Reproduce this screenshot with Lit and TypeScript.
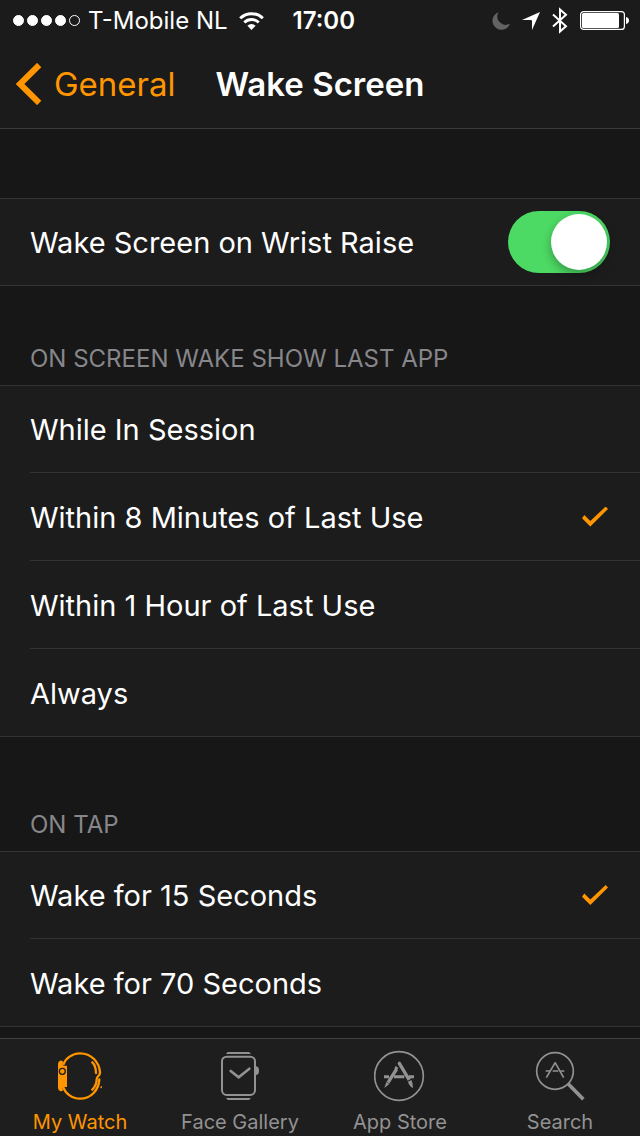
import { LitElement, html, css, svg } from "lit";
import { customElement, property, state } from "lit/decorators.js";

const moonIcon = svg`<svg class="moon" width="18" height="18" viewBox="0 0 18 18" aria-hidden="true"><path d="M6.6.2A9 9 0 1 0 18 11.6 8.3 8.3 0 0 1 6.6.2Z" fill="#636363"/></svg>`;
const arrowIcon = svg`<svg width="18" height="18" viewBox="0 0 18 18" aria-hidden="true"><path d="M18 0 10 18V9.2Q10 8 8.800 8H0Z" fill="#fff"/></svg>`;
const bluetoothIcon = svg`<svg width="16" height="27" viewBox="0 0 16 27" fill="none" stroke="#fff" stroke-width="2" aria-hidden="true"><path d="M1 7.500 14 19.300 8 24.600V2.400L14 7.700 1 19.500"/></svg>`;
const batteryIcon = svg`<svg width="49" height="19" viewBox="0 0 49 19" aria-hidden="true"><rect x=".6" y=".6" width="43.8" height="17.8" rx="3" fill="none" stroke="#fff" stroke-width="1.2"/><rect x="2" y="2" width="37" height="15" rx="1.500" fill="#fff"/><path d="M46 6q3 .8 3 3.500T46 13Z" fill="#fff"/></svg>`;
const wifiIcon = svg`<svg width="25" height="18" viewBox="0 0 25 18" aria-hidden="true"><g fill="none" stroke="#fff" stroke-width="3"><path d="M1.200 6.300a16 16 0 0 1 22.600 0"/><path d="M5.300 10.500a10.200 10.200 0 0 1 14.400 0"/></g><path d="M12.500 18 8.400 13.800a5.800 5.800 0 0 1 8.200 0Z" fill="#fff"/></svg>`;
const backIcon = svg`<svg width="26" height="42" viewBox="0 0 26 42" fill="none" stroke="currentColor" stroke-width="6" aria-hidden="true"><path d="M23.200 2 4 21l19.200 19"/></svg>`;

const watchIcon = svg`<svg class="icon" viewBox="162 90 156 156" aria-hidden="true">
  <path d="M174 132q0-7 6-10 8-2 9 4l-1 8 3 3h10v64h-10l-3 3 1 6q-2 6-9 3-6-3-6-10Z" fill="currentColor"/>
  <circle cx="187" cy="154" r="9" fill="currentColor" stroke="#1e1e1e" stroke-width="4"/>
  <g fill="none" stroke="currentColor" stroke-linecap="round" stroke-width="7">
    <path d="M191 132c4-14 24-32 49-32 34 0 58 26 60 58 0 10-10 10-10 20 0 13-5 23-13 31"/>
    <path d="M191 204c4 14 24 32 49 32 34 0 56-26 58-58"/>
    <path d="M277 127c8 8 11 19 11 32"/>
    <path stroke-width="4" d="M303 203l1-3"/>
  </g>
</svg>`;
const faceIcon = svg`<svg class="icon" viewBox="162 90 156 156" fill="none" stroke="currentColor" stroke-width="6" aria-hidden="true">
  <rect x="186" y="110" width="99" height="115" rx="14"/>
  <path d="m212 153 24 19 32-26" stroke-width="8" stroke-linecap="round"/>
  <path d="M203 96h64l6 6h-75ZM198 234h75l-6 6h-64ZM287 139q10 0 10 13t-10 13Z" fill="currentColor" stroke="none"/>
</svg>`;
const storeIcon = svg`<svg class="icon" viewBox="162 90 156 156" fill="none" stroke="currentColor" aria-hidden="true">
  <circle cx="237" cy="168" r="73" stroke-width="5"/>
  <path d="M192 170h15M222 170h31M266 170h16" stroke-width="9"/>
  <path d="M230 147 204 188" stroke-width="10"/>
  <path d="m227 138 8 5-4 7-8-5ZM199 186l9 6-15 12Z" fill="currentColor" stroke="none"/>
  <path d="M238 130 263 172" stroke-width="10" stroke-linecap="round"/>
  <path d="m260 177 10-6 3 5-10 6ZM264 185l10-5q5 8 5 24-12-6-15-19Z" fill="currentColor" stroke="none"/>
</svg>`;
const searchIcon = svg`<svg class="icon" viewBox="162 90 156 156" fill="none" stroke="currentColor" aria-hidden="true">
  <circle cx="225" cy="153" r="55" stroke-width="5"/>
  <path d="m265 192 45 46" stroke-width="11"/>
  <path d="M197 153h13M218 153h17M242 153h11" stroke-width="5"/>
  <path d="m226 127-27 46M225 127l26 46" stroke-width="5"/>
</svg>`;

@customElement("status-bar")
export class StatusBar extends LitElement {
  static styles = css`
    :host { display: flex; align-items: center; height: 41px; padding: 0 11px 0 13px; font-size: 24px; line-height: 40px; }
    .dots { display: flex; gap: 3px; margin-right: 8px; }
    .dot { box-sizing: border-box; width: 11px; height: 11px; border-radius: 50%; background: #fff; border: 1px solid #fff; }
    .empty { background: none; }
    .carrier { margin-right: 11px; }
    .time { margin-left: 29px; font-weight: 600; }
    .right { display: flex; align-items: center; gap: 12px; margin-left: auto; }
  `;
  render() {
    return html`
      <span class="dots" role="img" aria-label="Signal: 4 of 5">
        ${[1, 2, 3, 4, 5].map((n) => html`<span class="dot ${n > 4 ? "empty" : ""}"></span>`)}
      </span>
      <span class="carrier">T-Mobile NL</span>${wifiIcon}
      <span class="time">17:00</span>
      <span class="right">${moonIcon}${arrowIcon}${bluetoothIcon}${batteryIcon}</span>
    `;
  }
}

@customElement("option-group")
export class OptionGroup extends LitElement {
  @property() heading = "";
  @property({ attribute: false }) options: string[] = [];
  @property() value = "";

  static styles = css`
    :host { display: block; }
    .group { margin: 0; padding: 0; border: 0; min-width: 0; }
    .heading { padding: 0 30px 11px; color: #87868b; font-size: 24px; line-height: 30px; text-transform: uppercase; }
    .list { border: solid #333; border-width: 1px 0; background: #1c1c1c; }
    .option { box-sizing: border-box; display: flex; align-items: center; justify-content: space-between; height: 88px; margin-left: 30px; padding-right: 32px; border-bottom: 1px solid #333; font-size: 29px; line-height: 40px; }
    .option:first-child { height: 87px; }
    .option:last-child { height: 87px; border-bottom: 0; }
    .name { padding-top: 2px; }
    .check { appearance: none; flex: none; width: 26px; height: 20px; margin: 0; clip-path: polygon(9% 43%, 32% 72%, 91% 0, 100% 13%, 32% 100%, 0 59%); }
    .check:checked { background: #ff9500; }
  `;
  render() {
    return html`
      <fieldset class="group">
        <legend class="heading">${this.heading}</legend>
        <div class="list">
          ${this.options.map(
            (option) => html`<label class="option">
              <span class="name">${option}</span>
              <input class="check" type="radio" name="option" .checked=${option === this.value}
                @change=${() => (this.value = option)} />
            </label>`
          )}
        </div>
      </fieldset>
    `;
  }
}

@customElement("tab-bar")
export class TabBar extends LitElement {
  @state() private active = "My Watch";
  private tabs = [
    { label: "My Watch", icon: watchIcon },
    { label: "Face Gallery", icon: faceIcon },
    { label: "App Store", icon: storeIcon },
    { label: "Search", icon: searchIcon },
  ];
  static styles = css`
    :host { display: block; }
    .tabs { display: grid; grid-template-columns: repeat(4, 1fr); border-top: 1px solid #404040; background: #1e1e1e; }
    .tab { display: flex; flex-direction: column; align-items: center; gap: 8px; padding: 11px 0 2px; color: #929292; font-size: 20px; line-height: 24px; text-decoration: none; }
    .active { color: #ff9500; }
    .icon { display: block; width: 52px; height: 52px; }
  `;
  render() {
    return html`<nav class="tabs">
      ${this.tabs.map(
        (t) => html`<a class="tab ${t.label === this.active ? "active" : ""}" href="#"
          @click=${(e: Event) => { e.preventDefault(); this.active = t.label; }}>${t.icon}<span>${t.label}</span></a>`
      )}
    </nav>`;
  }
}

@customElement("app-root")
export class AppRoot extends LitElement {
  @state() private wake = true;
  static styles = css`
    :host { display: flex; flex-direction: column; height: 100vh; overflow: hidden; background: #171717; color: #fff; font-family: Inter, "Liberation Sans", sans-serif; }
    .header { flex: none; background: #1b1b1b; border-bottom: 1px solid #3a3a3a; }
    .navbar { box-sizing: border-box; display: grid; grid-template-columns: 1fr auto 1fr; align-items: center; height: 87px; padding: 0 16px 2px; }
    .back { justify-self: start; display: flex; align-items: center; gap: 12px; padding: 0; border: 0; background: none; color: #ff9500; font: 400 33px/44px Inter, "Liberation Sans", sans-serif; }
    .title { margin: 0; font-size: 33px; line-height: 44px; font-weight: 600; }
    .content { flex: 1; min-height: 0; overflow: hidden; padding-top: 69px; }
    .row { box-sizing: border-box; display: flex; align-items: center; justify-content: space-between; height: 88px; padding: 0 30px; border: solid #333; border-width: 1px 0; background: #1c1c1c; font-size: 29px; line-height: 40px; }
    .name { padding-top: 2px; }
    .switch { appearance: none; flex: none; display: flex; box-sizing: border-box; width: 102px; height: 62px; margin: 0; padding: 3px; border-radius: 31px; background: #4a4a4a; }
    .switch::before { content: ""; width: 56px; height: 56px; border-radius: 50%; background: #fff; box-shadow: 0 4px 10px rgb(0 0 0 / 30%); }
    .switch:checked { justify-content: flex-end; background: #4cd964; }
    .apps { margin-top: 58px; }
    .tap { margin-top: 73px; }
    .bottom { flex: none; }
  `;
  render() {
    return html`
      <header class="header">
        <status-bar></status-bar>
        <div class="navbar">
          <button class="back">${backIcon}<span>General</span></button>
          <h1 class="title">Wake Screen</h1>
        </div>
      </header>
      <main class="content">
        <label class="row">
          <span class="name">Wake Screen on Wrist Raise</span>
          <input class="switch" type="checkbox" role="switch" .checked=${this.wake}
            @change=${() => (this.wake = !this.wake)} />
        </label>
        <option-group class="apps" heading="On Screen Wake Show Last App"
          .options=${["While In Session", "Within 8 Minutes of Last Use", "Within 1 Hour of Last Use", "Always"]}
          value="Within 8 Minutes of Last Use"></option-group>
        <option-group class="tap" heading="On Tap"
          .options=${["Wake for 15 Seconds", "Wake for 70 Seconds"]}
          value="Wake for 15 Seconds"></option-group>
      </main>
      <tab-bar class="bottom"></tab-bar>
    `;
  }
}
